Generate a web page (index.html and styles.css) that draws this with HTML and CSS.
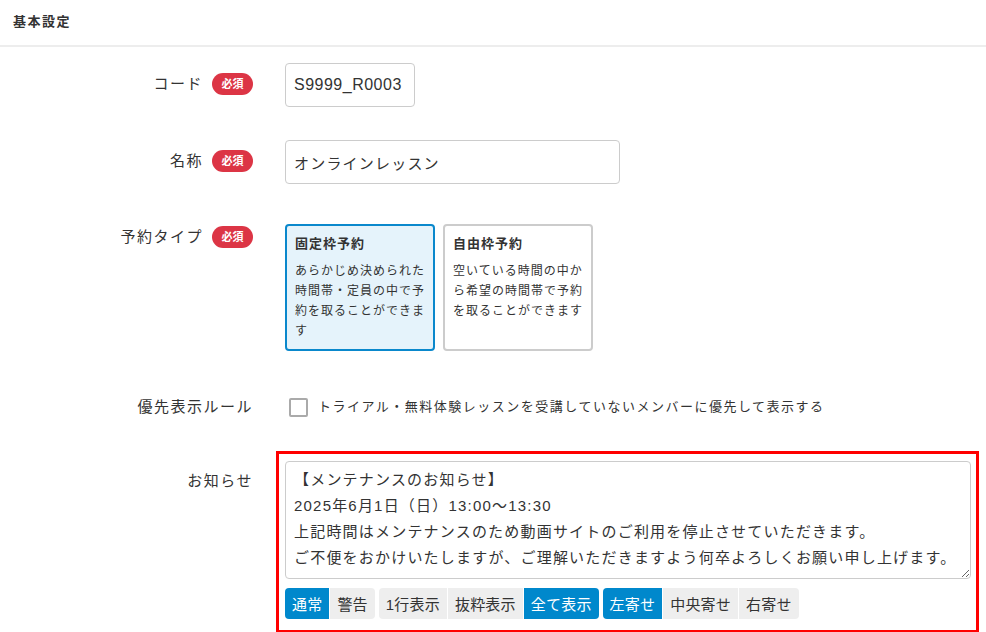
FILE: index.html
```html
<!DOCTYPE html>
<html lang="ja">
<head>
<meta charset="utf-8">
<title>基本設定</title>
<link rel="stylesheet" href="styles.css">
</head>
<body>
<div class="panel-header">基本設定</div>
<form class="form">
  <div class="row row-code">
    <div class="label label-input">コード<span class="badge">必須</span></div>
    <div class="field"><input class="input input-code" type="text" value="S9999_R0003"></div>
  </div>
  <div class="row row-name">
    <div class="label label-input">名称<span class="badge">必須</span></div>
    <div class="field"><input class="input input-name" type="text" value="オンラインレッスン"></div>
  </div>
  <div class="row row-type">
    <div class="label label-card">予約タイプ<span class="badge">必須</span></div>
    <div class="field cards">
      <div class="card card-active">
        <div class="card-title">固定枠予約</div>
        <div class="card-desc">あらかじめ決められた時間帯・定員の中で予約を取ることができます</div>
      </div>
      <div class="card">
        <div class="card-title">自由枠予約</div>
        <div class="card-desc">空いている時間の中から希望の時間帯で予約を取ることができます</div>
      </div>
    </div>
  </div>
  <div class="row row-priority">
    <div class="label label-check">優先表示ルール</div>
    <div class="field check-field">
      <span class="checkbox"></span>
      <span class="check-text">トライアル・無料体験レッスンを受講していないメンバーに優先して表示する</span>
    </div>
  </div>
  <div class="row row-notice">
    <div class="label label-notice">お知らせ</div>
    <div class="field notice-box">
      <textarea class="notice-text">【メンテナンスのお知らせ】
2025年6月1日（日）13:00～13:30
上記時間はメンテナンスのため動画サイトのご利用を停止させていただきます。
ご不便をおかけいたしますが、ご理解いただきますよう何卒よろしくお願い申し上げます。</textarea>
      <div class="toolbar">
        <div class="btn-group">
          <span class="btn btn-active">通常</span>
          <span class="btn">警告</span>
        </div>
        <div class="btn-group">
          <span class="btn">1行表示</span>
          <span class="btn">抜粋表示</span>
          <span class="btn btn-active">全て表示</span>
        </div>
        <div class="btn-group">
          <span class="btn btn-active">左寄せ</span>
          <span class="btn">中央寄せ</span>
          <span class="btn">右寄せ</span>
        </div>
      </div>
    </div>
  </div>
</form>
</body>
</html>
```
FILE: styles.css
```css
* { box-sizing: border-box; }
html, body {
  margin: 0;
  padding: 0;
  background: #fff;
  color: #333;
  font-family: "Liberation Sans", "Noto Sans CJK JP", sans-serif;
  overflow: hidden;
}
.panel-header {
  height: 47px;
  padding: 12px 0 0 13px;
  font-size: 13px;
  font-weight: bold;
  letter-spacing: 1.5px;
  line-height: 20px;
  border-bottom: 2px solid #ededed;
}
.form {
  display: flex;
  flex-direction: column;
}
.row {
  display: flex;
  align-items: flex-start;
}
.row-code { margin-top: 16px; }
.row-name { margin-top: 33px; }
.row-type { margin-top: 40px; }
.row-priority { margin-top: 46px; }
.row-notice { margin-top: 31px; }
.label {
  width: 253px;
  flex: none;
  display: flex;
  justify-content: flex-end;
  align-items: center;
  font-size: 15px;
  letter-spacing: 1.5px;
  line-height: 26px;
  margin-right: 32px;
}
.label-input { padding-top: 8px; }
.label-card { padding-top: 0; }
.label-check { padding-top: 0; margin-top: -3px; }
.label-notice { padding-top: 17px; }
.badge {
  display: inline-flex;
  align-items: center;
  justify-content: center;
  height: 22px;
  width: 41px;
  margin-left: 9px;
  border-radius: 11px;
  background: #dc3545;
  color: #fff;
  font-size: 11px;
  font-weight: bold;
  letter-spacing: 0;
}
.input {
  height: 44px;
  border: 1px solid #ccc;
  border-radius: 4px;
  padding: 0 8px;
  font-family: inherit;
  font-size: 16px;
  color: #333;
  letter-spacing: 0.5px;
  background: #fff;
  outline: none;
}
.input-code { width: 130px; }
.input-name { width: 335px; letter-spacing: 1.2px; font-size: 15px; }
.cards {
  display: flex;
  gap: 8px;
}
.card {
  width: 150px;
  height: 127px;
  border: 2px solid #ccc;
  border-radius: 4px;
  padding: 8px 8px 0 8px;
  background: #fff;
}
.card-active {
  border-color: #0a88cc;
  background: #e5f3fb;
}
.card-title {
  font-size: 13px;
  font-weight: bold;
  letter-spacing: 1px;
  line-height: 20px;
  margin-bottom: 7px;
}
.card-desc {
  font-size: 12px;
  letter-spacing: 1px;
  line-height: 20px;
}
.check-field {
  display: flex;
  align-items: center;
  margin-left: 4px;
}
.checkbox {
  width: 19px;
  height: 19px;
  border: 2px solid #aaa;
  border-radius: 2px;
  margin-right: 10px;
  flex: none;
}
.check-text {
  font-size: 13px;
  letter-spacing: 1.5px;
  line-height: 20px;
}
.notice-box {
  margin-left: -9px;
  width: 703px;
  border: 3px solid #ff0000;
  padding: 7px 5px 11px 6px;
}
.notice-text {
  display: block;
  width: 686px;
  height: 118px;
  border: 1px solid #ccc;
  border-radius: 4px;
  padding: 5px 8px;
  font-family: inherit;
  font-size: 15px;
  letter-spacing: 1.2px;
  line-height: 26px;
  color: #333;
  resize: vertical;
  overflow: hidden;
  outline: none;
}
.toolbar {
  display: flex;
  gap: 4px;
  margin-top: 9px;
}
.btn-group {
  display: flex;
  gap: 1px;
}
.btn {
  height: 31px;
  padding: 0 7px;
  display: flex;
  align-items: center;
  background: #eee;
  color: #333;
  font-size: 15px;
  letter-spacing: 0.2px;
}
.btn-group .btn:first-child { border-radius: 4px 0 0 4px; }
.btn-group .btn:last-child { border-radius: 0 4px 4px 0; }
.btn-active {
  background: #0088cc;
  color: #fff;
}
```
